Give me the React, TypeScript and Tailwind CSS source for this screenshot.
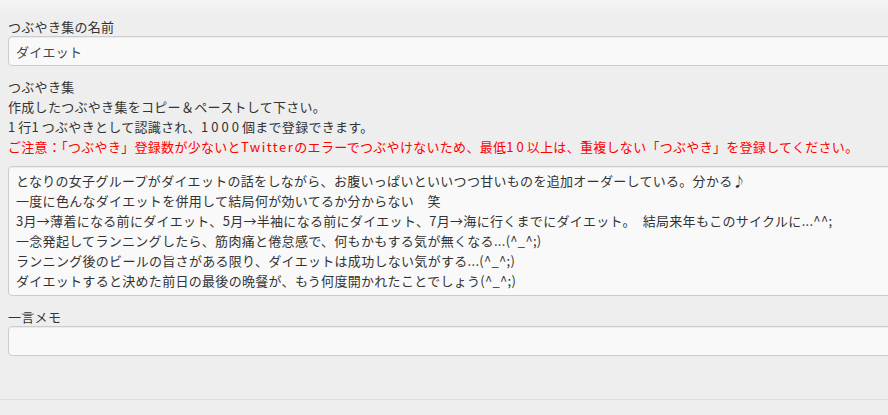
import React from 'react';

const tweets = [
  'となりの女子グループがダイエットの話をしながら、お腹いっぱいといいつつ甘いものを追加オーダーしている。分かる♪',
  '一度に色んなダイエットを併用して結局何が効いてるか分からない　笑',
  '3月→薄着になる前にダイエット、5月→半袖になる前にダイエット、7月→海に行くまでにダイエット。　結局来年もこのサイクルに...^^;',
  '一念発起してランニングしたら、筋肉痛と倦怠感で、何もかもする気が無くなる...(^_^;)',
  'ランニング後のビールの旨さがある限り、ダイエットは成功しない気がする...(^_^;)',
  'ダイエットすると決めた前日の最後の晩餐が、もう何度開かれたことでしょう(^_^;)',
];

const fieldClass =
  'block w-[920px] rounded-[4px] border border-[#cccccc] bg-[#f9f9f9] shadow-[inset_0_1px_1px_rgba(0,0,0,0.06)] outline-none';

// digits in the original render noticeably wider than the CJK font's
function Num({ children }: { children: React.ReactNode }) {
  return <span className="tracking-[3px]">{children}</span>;
}

export default function App() {
  return (
    <div
      className="min-h-[415px] w-full overflow-hidden bg-[#eeeeee] text-[13px] tracking-[0.3px] text-[#333333]"
      style={{ fontFamily: '"Noto Sans CJK JP", "Noto Sans", sans-serif' }}
    >
      <div className="h-[14px] bg-gradient-to-b from-[#f4f4f4] to-[#eeeeee]" />

      <div className="px-2 pt-[4px]">
        <div className="leading-[18px]">つぶやき集の名前</div>
        <input
          type="text"
          defaultValue="ダイエット"
          className={`${fieldClass} h-[30px] px-[7px] text-[13px] text-[#444444]`}
        />

        <div className="mt-[11px] leading-[20px]">
          <div>つぶやき集</div>
          <div>作成したつぶやき集をコピー＆ペーストして下さい。</div>
          <div>
            <Num>1</Num>行<Num>1</Num>つぶやきとして認識され、<Num>1000</Num>個まで登録できます。
          </div>
          <div className="text-[#ff0000]">
            ご注意：「つぶやき」登録数が少ないと<span className="tracking-[1.5px]">Twitter</span>のエラーでつぶやけないため、最低<Num>10</Num>以上は、重複しない「つぶやき」を登録してください。
          </div>
        </div>

        <div
          className={`${fieldClass} mt-[9px] h-[130px] overflow-hidden whitespace-nowrap px-[7px] py-[4px] leading-[20px] text-[#333333]`}
        >
          {tweets.map((t) => (
            <div key={t}>{t}</div>
          ))}
        </div>

        <div className="mt-[12px] leading-[18px]">一言メモ</div>
        <input type="text" className={`${fieldClass} h-[30px] px-[7px]`} />
      </div>

      <div className="mt-[43px] border-t border-[#dddddd]" />
    </div>
  );
}
